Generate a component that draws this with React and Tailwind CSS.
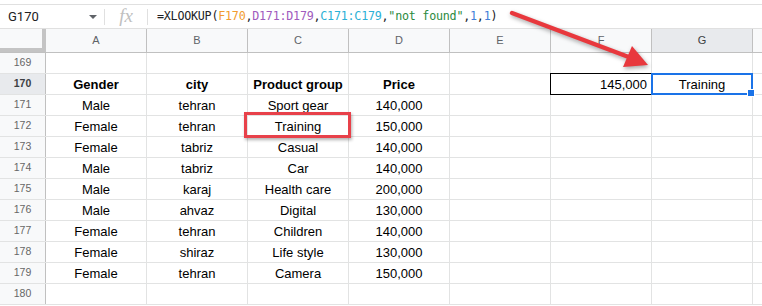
import React from 'react';

const COLS = ['A', 'B', 'C', 'D', 'E', 'F', 'G'];

const data = [
    ['Male', 'tehran', 'Sport gear', '140,000'],
    ['Female', 'tehran', 'Training', '150,000'],
    ['Female', 'tabriz', 'Casual', '140,000'],
    ['Male', 'tabriz', 'Car', '140,000'],
    ['Male', 'karaj', 'Health care', '200,000'],
    ['Male', 'ahvaz', 'Digital', '130,000'],
    ['Female', 'tehran', 'Children', '140,000'],
    ['Female', 'shiraz', 'Life style', '130,000'],
    ['Female', 'tehran', 'Camera', '150,000'],
];

const Cell = ({ children, className = '' }) => (
    <div className={`w-[101px] h-full shrink-0 border-r border-[#e2e3e3] flex items-center justify-center pt-[1px] ${className}`}>
        {children}
    </div>
);

const RowHead = ({ n, active }) => (
    <div className={`w-[46px] h-full shrink-0 border-r border-[#c0c0c0] flex items-center justify-center text-[10.5px] ${active ? 'bg-[#e8eaed] text-[#3c4043]' : 'bg-[#f8f9fa] text-[#666]'}`}>
        {n}
    </div>
);

const FormulaBar = () => (
    <div className="h-[25px] border-y border-[#e0e0e0] flex items-center bg-white">
        <div className="w-[104px] h-full flex items-center justify-between pl-[8px] pr-[7px]">
            <span className="text-[13px] text-[#202124] font-['Roboto',sans-serif]">G170</span>
            <span className="w-0 h-0 border-l-[4px] border-r-[4px] border-t-[4px] border-l-transparent border-r-transparent border-t-[#5f6368]" />
        </div>
        <div className="w-px h-[16px] bg-[#e0e0e0]" />
        <div className="w-[42px] flex items-center justify-center">
            <span className="text-[19px] italic text-[#c0c0c0] font-['Liberation_Serif',serif] leading-none -mt-[2px]">fx</span>
        </div>
        <div className="w-px h-[16px] bg-[#e0e0e0]" />
        <div className="pl-[9px] text-[11.7px] font-['DejaVu_Sans_Mono',monospace] text-[#202124] whitespace-pre tracking-[-0.02em]">
            =XLOOKUP(<span className="text-[#f29b2e]">F170</span>,<span className="text-[#a05bbd]">D171:D179</span>,<span className="text-[#2bb0d6]">C171:C179</span>,<span className="text-[#2b8a3e]">"not found"</span>,<span className="text-[#3f7fd8]">1</span>,<span className="text-[#3f7fd8]">1</span>)
        </div>
    </div>
);

const Arrow = () => (
    <svg className="absolute left-0 top-0 pointer-events-none drop-shadow-[1px_2px_2px_rgba(0,0,0,0.35)]" width="762" height="306">
        <line x1="512" y1="13" x2="630" y2="57.5" stroke="#e8383d" strokeWidth="4.5" strokeLinecap="round" />
        <polygon points="648,65 623,67 632,46" fill="#e8383d" />
    </svg>
);

export default function App() {
    return (
        <div className="relative w-[762px] h-[306px] overflow-hidden bg-white font-['Liberation_Sans',Arial,sans-serif] text-black">
            <div className="h-[4px]" />
            <FormulaBar />

            {/* Column headers */}
            <div className="h-[24px] flex border-b border-[#c0c0c0] bg-[#f8f9fa]">
                <div className="w-[46px] h-full shrink-0 border-r-4 border-b-4 border-[#c4c4c4]" />
                {COLS.map((c) => (
                    <div
                        key={c}
                        className={`w-[101px] h-full shrink-0 border-r border-[#c0c0c0] flex items-center justify-center text-[11px] ${c === 'G' ? 'bg-[#e8eaed] text-[#3c4043]' : 'text-[#5f6368]'}`}
                    >
                        {c}
                    </div>
                ))}
                <div className="flex-1" />
            </div>

            {/* Row 169 */}
            <div className="h-[21px] flex border-b border-[#e2e3e3]">
                <RowHead n={169} />
                {COLS.map((c) => <Cell key={c} />)}
            </div>

            {/* Row 170 */}
            <div className="h-[21px] flex border-b border-[#e2e3e3] text-[13px] font-bold">
                <RowHead n={170} active />
                <Cell>Gender</Cell>
                <Cell>city</Cell>
                <Cell>Product group</Cell>
                <Cell>Price</Cell>
                <Cell />
                <Cell className="!justify-end pr-[4px] font-normal">145,000</Cell>
                <Cell className="font-normal">Training</Cell>
            </div>

            {data.map((r, i) => (
                <div key={i} className="h-[21px] flex border-b border-[#e2e3e3] text-[13px]">
                    <RowHead n={171 + i} />
                    {r.map((v, j) => <Cell key={j}>{v}</Cell>)}
                    <Cell />
                    <Cell />
                    <Cell />
                </div>
            ))}

            <div className="h-[21px] flex border-b border-[#e2e3e3]">
                <RowHead n={180} />
                {COLS.map((c) => <Cell key={c} />)}
            </div>

            {/* F170 black border */}
            <div className="absolute left-[550px] top-[73px] w-[102px] h-[22px] border border-black pointer-events-none" />
            {/* G170 selection */}
            <div className="absolute left-[651px] top-[73px] w-[102px] h-[22px] border-2 border-[#1a73e8] pointer-events-none" />
            <div className="absolute left-[748px] top-[90px] w-[6px] h-[6px] bg-[#1a73e8] border border-white box-content -ml-[1px] -mt-[1px]" />

            {/* red highlight box */}
            <div className="absolute left-[244px] top-[112px] w-[107px] h-[26px] border-[3px] border-[#e8414a] shadow-[1px_2px_3px_rgba(0,0,0,0.3)]" />

            <Arrow />
        </div>
    );
}
